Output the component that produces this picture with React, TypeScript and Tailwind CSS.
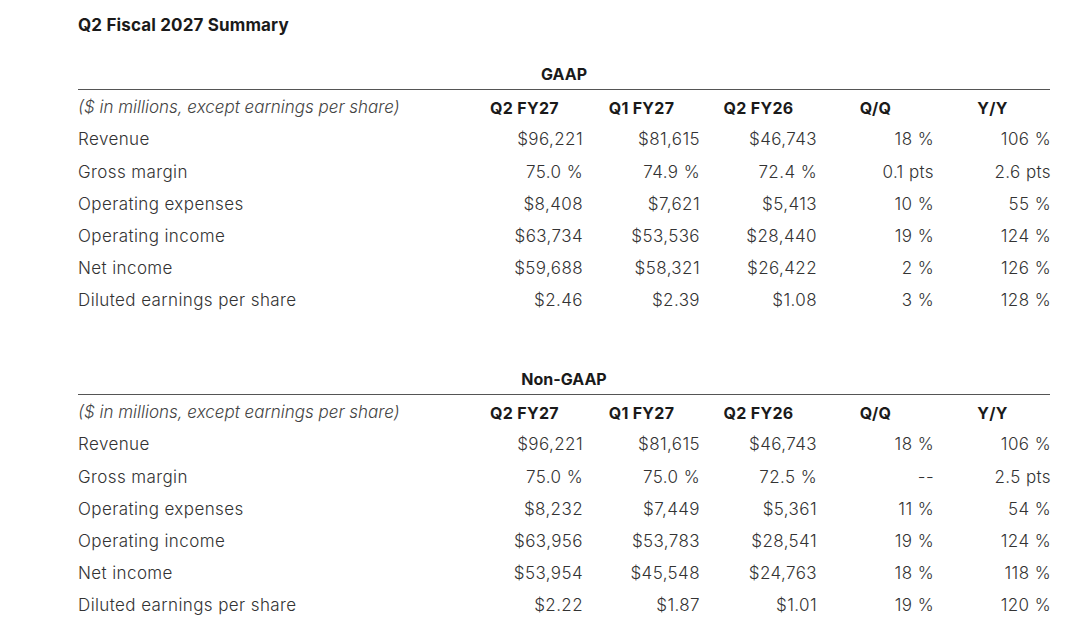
const gaap = [
  ["Revenue", "$96,221", "$81,615", "$46,743", "18 %", "106 %"],
  ["Gross margin", "75.0 %", "74.9 %", "72.4 %", "0.1 pts", "2.6 pts"],
  ["Operating expenses", "$8,408", "$7,621", "$5,413", "10 %", "55 %"],
  ["Operating income", "$63,734", "$53,536", "$28,440", "19 %", "124 %"],
  ["Net income", "$59,688", "$58,321", "$26,422", "2 %", "126 %"],
  ["Diluted earnings per share", "$2.46", "$2.39", "$1.08", "3 %", "128 %"],
];

const nonGaap = [
  ["Revenue", "$96,221", "$81,615", "$46,743", "18 %", "106 %"],
  ["Gross margin", "75.0 %", "75.0 %", "72.5 %", "--", "2.5 pts"],
  ["Operating expenses", "$8,232", "$7,449", "$5,361", "11 %", "54 %"],
  ["Operating income", "$63,956", "$53,783", "$28,541", "19 %", "124 %"],
  ["Net income", "$53,954", "$45,548", "$24,763", "18 %", "118 %"],
  ["Diluted earnings per share", "$2.22", "$1.87", "$1.01", "19 %", "120 %"],
];

const heads = ["Q2 FY27", "Q1 FY27", "Q2 FY26", "Q/Q", "Y/Y"];

function SummaryTable({ title, rows }: { title: string; rows: string[][] }) {
  return (
    <div className="w-[972px]">
      <div className="h-[32px] flex items-center justify-center border-b-[1.5px] border-[#555] text-[16px] font-bold text-[#1a1a1a]">
        {title}
      </div>
      <div className="grid grid-cols-[388px_repeat(5,117px)]">
        <div className="h-[32px] pt-[3px] flex items-center italic font-light text-[17px] text-[#444]">
          ($ in millions, except earnings per share)
        </div>
        {heads.map(h => (
          <div key={h} className="h-[32px] pt-[3px] flex items-center justify-center text-[16px] font-bold tracking-[0.3px] text-[#1a1a1a]">
            {h}
          </div>
        ))}
        {rows.map(r =>
          r.map((c, i) => (
            <div
              key={r[0] + i}
              className={
                i === 0
                  ? "h-[32.2px] pt-[4px] flex items-center text-[17px] font-light tracking-[0.4px] text-[#333]"
                  : "h-[32.2px] pt-[4px] flex items-center justify-end text-[17px] font-light tracking-[0.4px] text-[#333]"
              }
            >
              {c}
            </div>
          ))
        )}
      </div>
    </div>
  );
}

export default function App() {
  return (
    <div
      className="w-[1080px] h-[619px] bg-white pl-[78px] pt-[13px] overflow-hidden"
      style={{ fontFamily: 'Inter, "Open Sans", "Liberation Sans", sans-serif' }}
    >
      <div className="h-[24px] pt-[2px] flex items-center text-[17px] font-bold tracking-[0.15px] text-[#1a1a1a]">
        Q2 Fiscal 2027 Summary
      </div>
      <div className="mt-[21px]">
        <SummaryTable title="GAAP" rows={gaap} />
      </div>
      <div className="mt-[48px]">
        <SummaryTable title="Non-GAAP" rows={nonGaap} />
      </div>
    </div>
  );
}
